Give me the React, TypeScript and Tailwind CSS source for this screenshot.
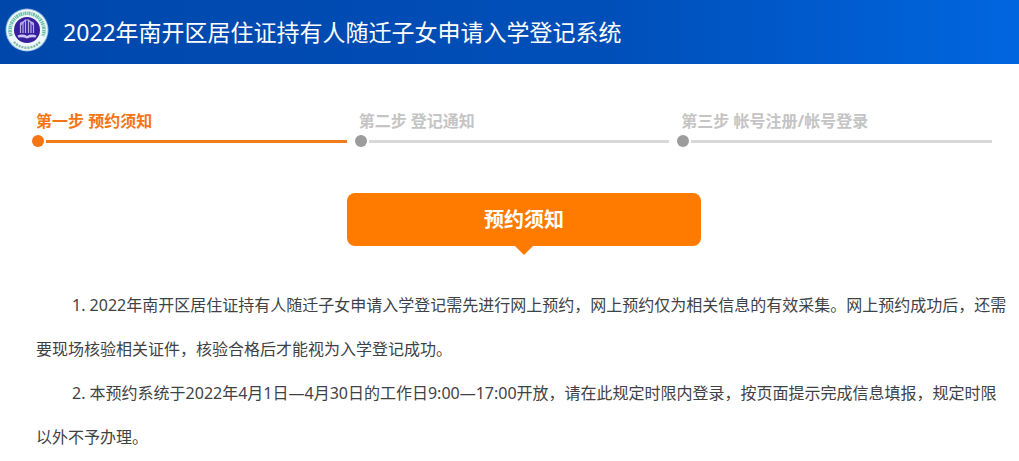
const steps = [
  { id: 1, label: '第一步 预约须知', active: true },
  { id: 2, label: '第二步 登记通知', active: false },
  { id: 3, label: '第三步 帐号注册/帐号登录', active: false },
];

const notices = [
  '1. 2022年南开区居住证持有人随迁子女申请入学登记需先进行网上预约，网上预约仅为相关信息的有效采集。网上预约成功后，还需要现场核验相关证件，核验合格后才能视为入学登记成功。',
  '2. 本预约系统于2022年4月1日—4月30日的工作日9:00—17:00开放，请在此规定时限内登录，按页面提示完成信息填报，规定时限以外不予办理。',
];

function Logo() {
  return (
    <svg viewBox="0 0 44 44" className="mb-1 size-11 shrink-0" aria-hidden="true">
      <circle cx="22" cy="22" r="21.5" fill="#8fbbe0" />
      <circle cx="22" cy="22" r="20.5" fill="#eef7fa" />
      {/* Letras del anillo exterior */}
      <path
        d="M6 28A17 17 0 1 1 38 28"
        fill="none"
        stroke="#6cbfa6"
        strokeWidth="3.6"
        strokeDasharray="1.6 .7 1 .6 2 .8 1.4 .5"
      />
      <path
        d="M9 34A17.500 17.500 0 0 0 35 34"
        fill="none"
        stroke="#7fb8a6"
        strokeWidth="2.4"
        strokeDasharray="2 1"
      />
      <circle cx="22" cy="22" r="13" fill="#36209c" />
      <g fill="none" stroke="#b9aeea" strokeWidth="1.2">
        <path d="M15.500 25V16Q15.500 14 18 14V25" />
        <path d="M20.500 25V12H23.500V25" />
        <path d="M26 25V14Q28.500 14 28.500 16V25" />
        <path d="M15.500 17L20.500 12M28.500 17L23.500 12" />
      </g>
      <path
        d="M12.500 27.500Q18 25.500 22 28Q26 25.500 31.500 27.500L30.500 29.500Q26 28.500 22 30.500Q18 28.500 13.500 29.500Z"
        fill="#cfc6f2"
      />
    </svg>
  );
}

function Step({ label, active }: { label: string; active: boolean }) {
  return (
    <li aria-current={active ? 'step' : undefined}>
      <p
        className={`pl-1 text-base leading-6 font-bold whitespace-nowrap ${
          active ? 'text-[#f47512]' : 'text-[#c4c4c4]'
        }`}
      >
        {label}
      </p>
      <div className="mt-0.5 flex items-center gap-0.5">
        <span
          className={`size-3 shrink-0 rounded-full ${
            active ? 'bg-[#f47512]' : 'bg-[#9c9c9c]'
          }`}
        />
        <span
          className={`h-[3px] flex-1 ${
            active ? 'bg-[#f07c1c]' : 'bg-[#d8d8d8]'
          }`}
        />
      </div>
    </li>
  );
}

export default function App() {
  return (
    <div className="bg-white font-['Noto_Sans','Noto_Sans_CJK_SC',sans-serif]">
      <header className="flex h-16 items-center gap-3.5 bg-linear-to-r from-[#0047ab] via-[#004fb9] via-60% to-[#0066e0] pl-[5px]">
        <Logo />
        <h1 className="text-[23px] leading-8 text-white">
          2022年南开区居住证持有人随迁子女申请入学登记系统
        </h1>
      </header>

      <main>
        <ol className="grid grid-cols-3 gap-2 pt-[45px] pr-[27px] pl-8">
          {steps.map((step) => (
            <Step key={step.id} label={step.label} active={step.active} />
          ))}
        </ol>

        <section className="pt-[46px] pr-[7px] pl-9">
          <div className="mx-auto flex w-[354px] max-w-full flex-col items-center">
            <h2 className="w-full rounded-lg bg-[#ff7b00] text-center text-xl leading-[53px] font-bold text-white">
              预约须知
            </h2>
            <span className="border-x-9 border-t-9 border-x-transparent border-t-[#ff7b00]" />
          </div>

          <div className="pt-7 text-base leading-11 text-[#3f4245]">
            {notices.map((notice) => (
              <p key={notice} className="indent-9">
                {notice}
              </p>
            ))}
          </div>
        </section>
      </main>
    </div>
  );
}
